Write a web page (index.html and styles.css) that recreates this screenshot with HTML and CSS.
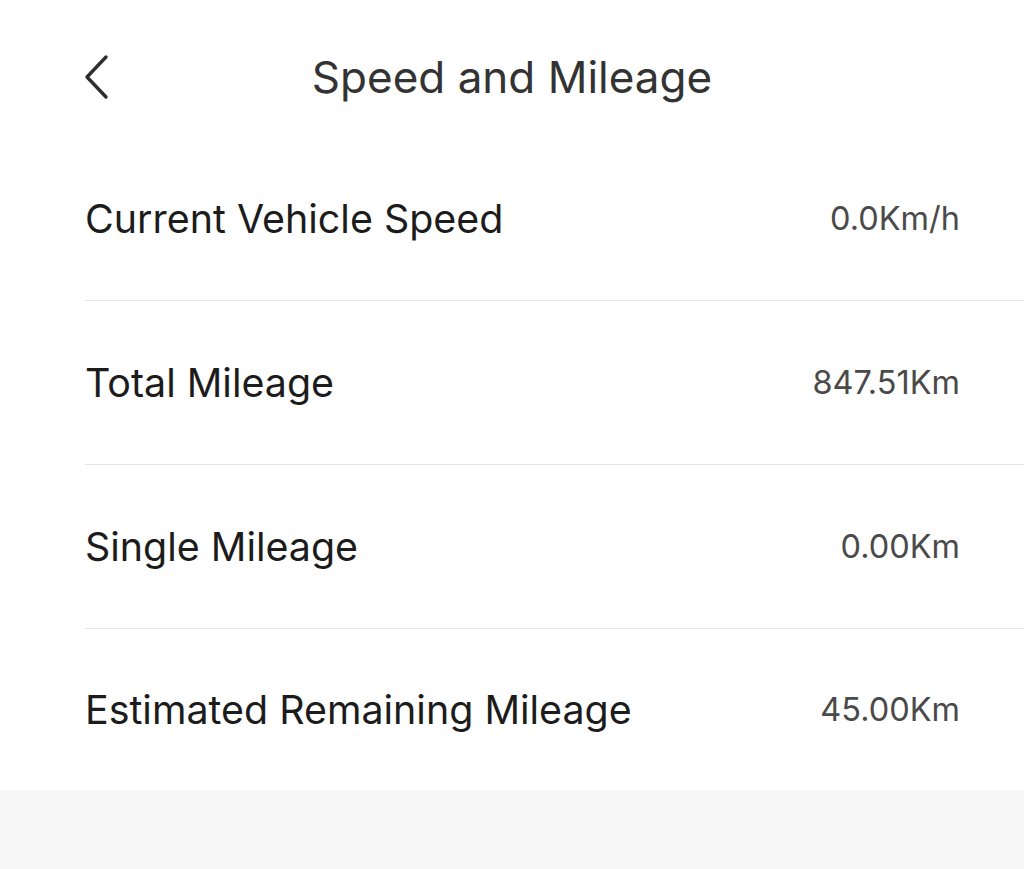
FILE: index.html
```html
<!DOCTYPE html>
<html>
  <head>
    <meta charset="utf-8">
    <link rel="stylesheet" href="styles.css">
  </head>
  <body>
    <div class="page">
      <div class="header">
        <div class="back">
          <svg width="26" height="46" viewBox="0 0 26 46">
            <polyline points="22,3 3,23 22,43" fill="none" stroke="#2e2e2e" stroke-width="3.4" stroke-linecap="round" stroke-linejoin="round"/>
          </svg>
        </div>
        <div class="title">Speed and Mileage</div>
        <div></div>
      </div>
      <div class="list">
        <div class="row">
          <div class="label">Current Vehicle Speed</div>
          <div class="value">0.0Km/h</div>
        </div>
        <div class="row">
          <div class="label">Total Mileage</div>
          <div class="value">847.51Km</div>
        </div>
        <div class="row">
          <div class="label">Single Mileage</div>
          <div class="value">0.00Km</div>
        </div>
        <div class="row">
          <div class="label">Estimated Remaining Mileage</div>
          <div class="value">45.00Km</div>
        </div>
      </div>
    </div>
  </body>
</html>
```

FILE: styles.css
```css
body {
  margin: 0;
  background-color: #f6f6f6;
  font-family: Inter, "Noto Sans", sans-serif;
}

.page {
  background-color: white;
}

.header {
  display: grid;
  grid-template-columns: 1fr auto 1fr;
  align-items: center;
  height: 137px;
  padding-top: 16px;
  box-sizing: border-box;
}

.back {
  padding-left: 84px;
  display: flex;
}

.title {
  font-size: 44px;
  color: #333;
}

.row {
  display: flex;
  justify-content: space-between;
  align-items: center;
  height: 163px;
  margin-left: 85px;
  padding-right: 64px;
  border-bottom: 1px solid #e6e6e6;
}

.row:last-child {
  height: 161px;
  border-bottom: none;
}

.label {
  font-size: 39.4px;
  color: #1c1c1c;
}

.value {
  font-size: 32.5px;
  color: #4a4a4a;
}
```
